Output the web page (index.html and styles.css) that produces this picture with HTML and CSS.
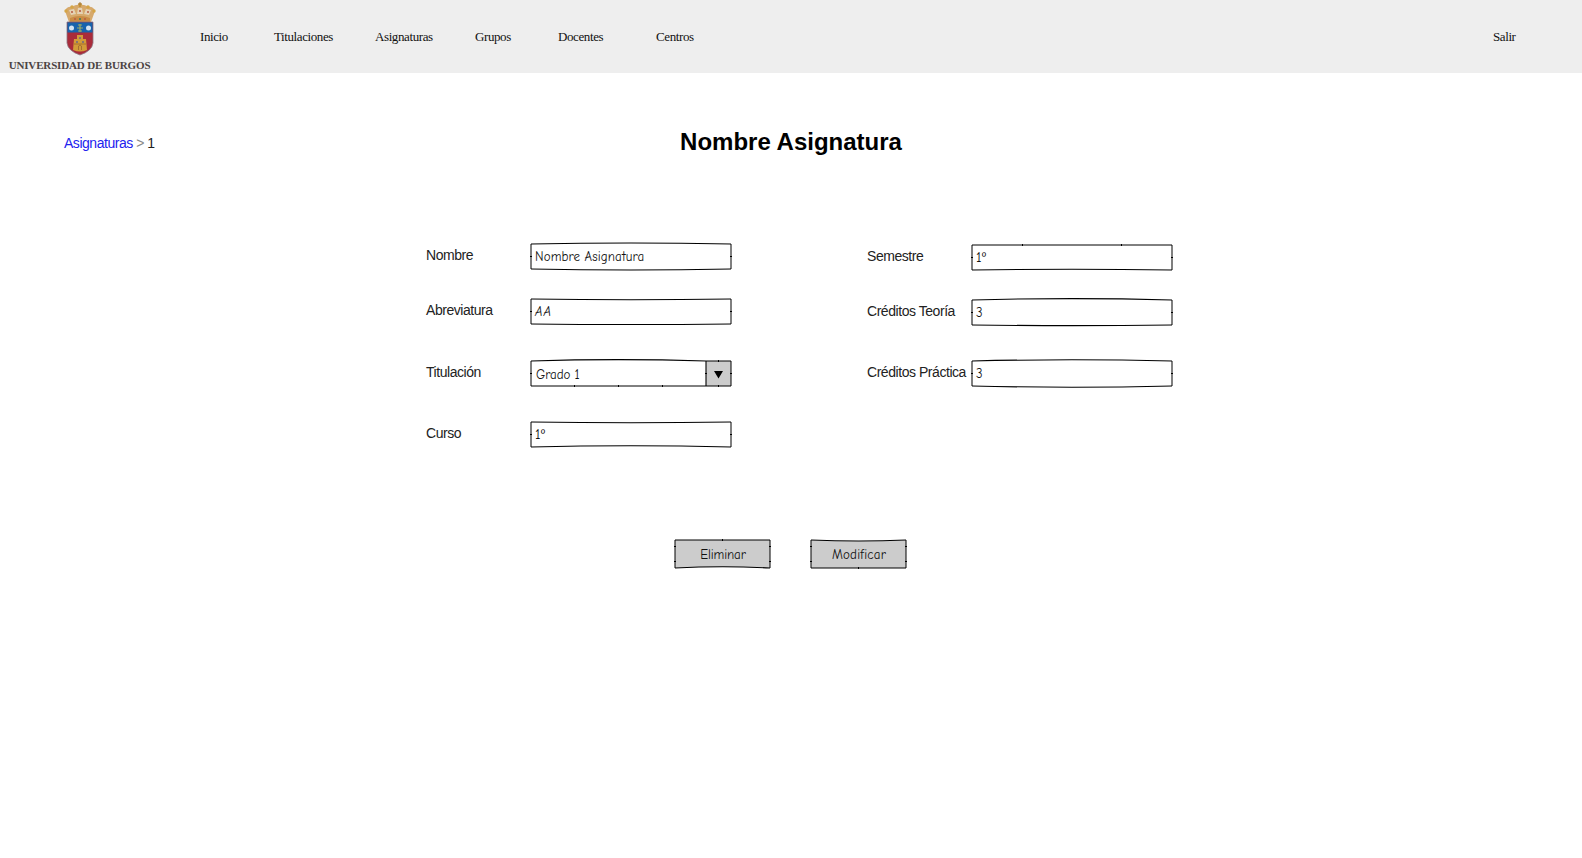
FILE: index.html
```html
<!DOCTYPE html>
<html lang="es">
<head>
<meta charset="utf-8">
<title>Nombre Asignatura</title>
<link rel="stylesheet" href="styles.css">
</head>
<body>
<header class="topbar">
  <div class="brand">
    <svg class="crest" viewBox="0 0 32 54" width="32" height="54">
      <path d="M5 20 L1 9 Q3 4 8 5 Q12 2 16 3 Q20 2 24 5 Q29 4 31 9 L27 20 Z" fill="#d6a96c"/>
      <path d="M7 13 L5 8 L10 7 L12 12 Z M13 12 L14 6 H18 L19 12 Z M20 12 L22 7 L27 8 L25 13 Z" fill="#e4d2b5"/>
      <path d="M6 16 Q16 12 26 16 L26 20 H6 Z" fill="#c98c45"/>
      <g fill="#d5a546"><circle cx="2" cy="9" r="1.7"/><circle cx="8" cy="5" r="1.8"/><circle cx="16" cy="3" r="1.9"/><circle cx="24" cy="5" r="1.8"/><circle cx="30" cy="9" r="1.7"/></g>
      <path d="M16 0 V5 M14 2 H18" stroke="#a97a35"/>
      <g fill="#b85b42"><circle cx="8" cy="10" r="1"/><circle cx="16" cy="9" r="1.1"/><circle cx="24" cy="10" r="1"/><circle cx="11" cy="17" r="1"/><circle cx="21" cy="17" r="1"/></g>
      <circle cx="16" cy="17" r="1" fill="#397a60"/>
      <path d="M3 20 H29 V41 Q28 49 16 53 Q4 49 3 41 Z" fill="#a92b3a" stroke="#8b7783" stroke-width=".8"/>
      <path d="M3.4 20.4 H28.6 V30.5 H3.4 Z" fill="#1763ad"/>
      <g fill="#d3e3f2"><circle cx="7.5" cy="26" r="2.5"/><circle cx="24.5" cy="26" r="2.5"/></g>
      <path d="M16 22 V30 M13 26 H19 M14 23 H18 M14 29 H18" stroke="#9caa66" stroke-width="1.2"/>
      <path d="M9 48 L10 37 H13 V33 H19 V37 H22 L23 48 Q16 51 9 48 Z" fill="#d29a38"/>
      <path d="M12 40 H14 M18 40 H20 M15 36 H17" stroke="#6b6880" stroke-width="1.5"/>
      <path d="M14.5 48 V44 Q16 42 17.5 44 V48 M10 42 H22" fill="none" stroke="#9c642c" stroke-width=".8"/>
    </svg>
    <span class="brand-name">UNIVERSIDAD DE BURGOS</span>
  </div>
  <nav class="menu">
    <a class="item inicio">Inicio</a>
    <a class="item titulaciones">Titulaciones</a>
    <a class="item asignaturas">Asignaturas</a>
    <a class="item grupos">Grupos</a>
    <a class="item docentes">Docentes</a>
    <a class="item centros">Centros</a>
  </nav>
  <a class="item logout">Salir</a>
</header>
<main>
  <div class="heading">
    <div class="crumbs"><a class="crumb-link">Asignaturas</a> <span class="crumb-sep">&gt;</span> 1</div>
    <h1 class="title">Nombre Asignatura</h1>
  </div>
  <form class="form">
    <div class="column">
      <div class="row r1"><label class="label">Nombre</label>
        <div class="field"><svg class="frame" viewBox="0 0 202 29"><path class="side" d="M1 2V27M201 2V27"/><path class="edge" d="M1 2Q101 0 201 2M1 27Q101 29 201 27"/><path class="tick" d="M0 14.5H2M200 14.5H202"/></svg><span class="value name-value">Nombre Asignatura</span></div></div>
      <div class="row r2"><label class="label">Abreviatura</label>
        <div class="field"><svg class="frame" viewBox="0 0 202 29"><path class="side" d="M1 2V27M201 2V27"/><path class="edge" d="M1 2Q101 3.6 201 2M1 27Q101 28 201 27"/><path class="tick" d="M0 14.5H2M200 14.5H202"/></svg><span class="value abbr-value">AA</span></div></div>
      <div class="row r3"><label class="label">Titulación</label>
        <div class="field"><svg class="frame" viewBox="0 0 202 29"><path class="fill" d="M176 2H201V27H176Z"/><path class="side" d="M1 2V27M201 2V27M1 27H201M176 2H201"/><path class="edge" d="M1 2Q88 -.8 176 2M176 2V27"/><path class="tick" d="M0 14.5H2M200 14.5H202M175 14.5H177M44.5 26V28M88.5 26V28M132.5 26V28M188.500 1V3M188.500 26V28"/><path class="arrow" d="M184 12H193L188.500 19.500Z"/></svg><span class="value degree-value">Grado 1</span></div></div>
      <div class="row r4"><label class="label">Curso</label>
        <div class="field"><svg class="frame" viewBox="0 0 202 29"><path class="side" d="M1 2V27M201 2V27"/><path class="edge" d="M1 2Q101 3.600 201 2M1 27Q101 24.500 201 27"/><path class="tick" d="M0 14.5H2M200 14.5H202"/></svg><span class="value ordinal">1º</span></div></div>
    </div>
    <div class="column">
      <div class="row s1"><label class="label">Semestre</label>
        <div class="field"><svg class="frame" viewBox="0 0 202 29"><path class="side" d="M1 2V27M201 2V27M1 2H201"/><path class="edge" d="M1 27Q101 25.500 201 27"/><path class="tick" d="M0 14.5H2M200 14.5H202M51.5 1V3M150.5 1V3"/></svg><span class="value ordinal">1º</span></div></div>
      <div class="row s2"><label class="label">Créditos Teoría</label>
        <div class="field"><svg class="frame" viewBox="0 0 202 29"><path class="side" d="M1 2V27M201 2V27"/><path class="edge" d="M1 2Q101 -.8 201 2M1 27Q101 28.2 201 27"/><path class="tick" d="M0 14.5H2M200 14.5H202"/></svg><span class="value">3</span></div></div>
      <div class="row s3"><label class="label">Créditos Práctica</label>
        <div class="field"><svg class="frame" viewBox="0 0 202 29"><path class="side" d="M1 2V27M201 2V27"/><path class="edge" d="M1 2Q101 -.4 201 2M1 27Q101 29.400 201 27"/><path class="tick" d="M0 14.5H2M200 14.5H202"/></svg><span class="value">3</span></div></div>
    </div>
  </form>
  <div class="actions">
    <button class="button" type="button"><svg class="frame" viewBox="0 0 98 31"><path class="fill" d="M1 2H96V30Q49 28 1 30Z"/><path class="side" d="M1 2H96M1 2V30M96 2V30"/><path class="edge" d="M1 30Q49 27.500 96 30"/><path class="tick" d="M48.500 1V3M0 8.500H2M0 23.500H2M95 8.500H97M95 23.500H97"/></svg><span class="caption delete">Eliminar</span></button>
    <button class="button" type="button"><svg class="frame" viewBox="0 0 98 31"><path class="fill" d="M1 2Q49 4 96 2V30H1Z"/><path class="side" d="M1 30H96M1 2V30M96 2V30"/><path class="edge" d="M1 2Q49 4 96 2"/><path class="tick" d="M48.500 29V31M0 8.500H2M0 23.500H2M95 8.500H97M95 23.500H97"/></svg><span class="caption modify">Modificar</span></button>
  </div>
</main>
</body>
</html>
```
FILE: styles.css
```css
* { box-sizing: border-box; }
body { margin: 0; background: #fff; color: #222; font: 14px/20px "Liberation Sans", Arial, sans-serif; }
.topbar { display: flex; height: 73px; background: #eee; }
.brand { display: flex; flex-direction: column; align-items: center; width: 159px; margin-right: 1px; padding-top: 2px; }
.crest { display: block; flex: none; }
.brand-name { margin-top: 3px; font: bold 11px/13px "Liberation Serif", "Times New Roman", serif; color: #4b4343; white-space: nowrap; letter-spacing: -.15px; }
.menu { display: flex; flex: 1; padding-left: 40px; }
.item { padding-top: 27px; font: 13px/20px "Liberation Serif", "Times New Roman", serif; color: #111; white-space: nowrap; letter-spacing: -.4px; }
.inicio { width: 74px; }
.titulaciones { width: 101px; }
.asignaturas { width: 100px; }
.grupos { width: 83px; }
.docentes { width: 98px; }
.logout { width: 89px; }
.heading { display: grid; grid-template-columns: 1fr auto 1fr; padding-top: 54px; }
.crumbs { padding: 6px 0 0 64px; white-space: pre; letter-spacing: -.47px; }
.crumb-link { color: #2222ee; }
.crumb-sep { color: #888; }
.title { margin: 0; color: #000; font-size: 24px; line-height: 30px; }
.form { display: flex; gap: 135px; padding: 85px 0 0 426px; }
.column { width: 306px; }
.row { display: flex; justify-content: space-between; height: 29px; }
.label { padding-top: 3px; white-space: nowrap; letter-spacing: -.45px; }
.field { position: relative; flex: none; width: 202px; height: 29px; }
.frame { position: absolute; left: 0; top: 0; width: 100%; height: 100%; fill: none; overflow: visible; }
.value { position: absolute; left: 5px; top: 5px; white-space: nowrap; font-family: "Comic Sans MS", "Comic Neue", Lato, sans-serif; font-size: 13px; color: #111; }
.name-value { letter-spacing: .1px; }
.abbr-value { font-style: italic; letter-spacing: 1px; }
.degree-value { left: 6px; top: 6px; letter-spacing: -.1px; }
.ordinal { font-size: 14px; letter-spacing: .5px; }
.side { stroke: #000; stroke-width: 1; }
.edge { stroke: #000; stroke-width: 1.1; }
.tick { stroke: #000; stroke-width: 1; }
.fill { fill: #ccc; }
.arrow { fill: #000; }
.r2 { margin-top: 26px; }
.r3 { margin-top: 33px; }
.r4 { margin-top: 32px; }
.s1 { margin-top: 1px; }
.s2 { margin-top: 26px; }
.s3 { margin-top: 32px; }
.actions { display: flex; gap: 38px; padding: 89px 0 0 674px; }
.button { position: relative; width: 98px; height: 31px; padding: 2px 0 0; border: 0; background: none; }
.caption { position: relative; font: 13px/20px "Comic Sans MS", "Comic Neue", Lato, sans-serif; color: #111; }
.delete { letter-spacing: -.1px; }
.modify { letter-spacing: .2px; }
```
